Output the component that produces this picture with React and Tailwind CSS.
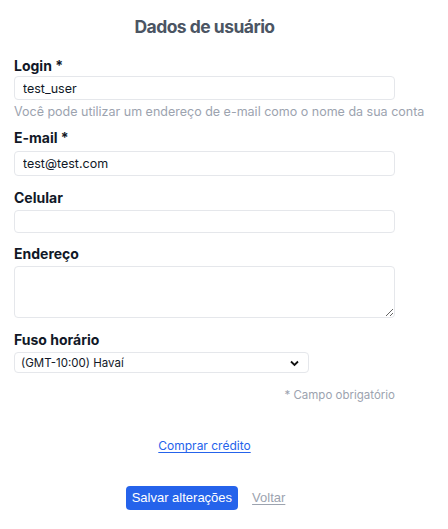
export default function App() {
  return (
    <div className="min-h-[529px] bg-white font-['Inter','Liberation_Sans',sans-serif] text-[#111827]">
      <div className="w-[381px] ml-[14px] pt-[16px]">
        <h1 className="text-center text-[17.5px] font-bold tracking-[-0.03em] text-[#4b5563] leading-[22px]">
          Dados de usuário
        </h1>

        <form className="mt-[19px]">
          <label className="block text-[14px] font-bold leading-[18px]">Login *</label>
          <input
            defaultValue="test_user"
            className="mt-[1px] block w-full h-[24px] rounded-[4px] border border-[#e5e7eb] px-[8px] text-[12.5px] outline-none"
          />
          <p className="mt-[3px] text-[12.5px] leading-[18px] text-[#9ca3af] whitespace-nowrap">
            Você pode utilizar um endereço de e-mail como o nome da sua conta
          </p>

          <label className="mt-[8px] block text-[14px] font-bold leading-[18px]">E-mail *</label>
          <input
            defaultValue="test@test.com"
            className="mt-[4px] block w-full h-[25px] rounded-[4px] border border-[#e5e7eb] px-[8px] text-[12.5px] outline-none"
          />

          <label className="mt-[13px] block text-[14px] font-bold leading-[18px]">Celular</label>
          <input
            className="mt-[3px] block w-full h-[23px] rounded-[4px] border border-[#e5e7eb] px-[8px] text-[12.5px] outline-none"
          />

          <label className="mt-[12px] block text-[14px] font-bold leading-[18px]">Endereço</label>
          <textarea className="mt-[3px] block w-full h-[52px] rounded-[4px] border border-[#e5e7eb] px-[8px] text-[12.5px] outline-none" />

          <label className="mt-[13px] block text-[14px] font-bold leading-[18px]">Fuso horário</label>
          <div className="relative mt-[3px] w-[295px]">
            <select
              defaultValue="hi"
              className="block w-full h-[21px] appearance-none rounded-[4px] border border-[#e5e7eb] bg-white pl-[6px] pr-[24px] text-[11.5px] leading-[18px] outline-none"
            >
              <option value="hi">(GMT-10:00) Havaí</option>
            </select>
            <svg
              className="pointer-events-none absolute right-[10px] top-[7px]"
              width="9"
              height="8"
              viewBox="0 0 9 8"
            >
              <path d="M1 2.5 L4.5 6 L8 2.5" fill="none" stroke="#111" strokeWidth="1.8" />
            </svg>
          </div>

          <p className="mt-[14px] text-right text-[11.5px] leading-[16px] text-[#9ca3af]">* Campo obrigatório</p>

          <div className="mt-[29px] text-center">
            <a href="#" className="text-[12px] text-[#2563eb] underline underline-offset-2">
              Comprar crédito
            </a>
          </div>

          <div className="mt-[30px] flex items-center justify-center gap-[14px] pl-[2px] font-['Liberation_Sans',sans-serif]">
            <button
              type="button"
              className="h-[24px] rounded-[4px] bg-[#2563eb] px-[6px] text-[13px] text-white"
            >
              Salvar alterações
            </button>
            <a href="#" className="text-[13px] text-[#9ca3af] underline underline-offset-2">
              Voltar
            </a>
          </div>
        </form>
      </div>
    </div>
  );
}
